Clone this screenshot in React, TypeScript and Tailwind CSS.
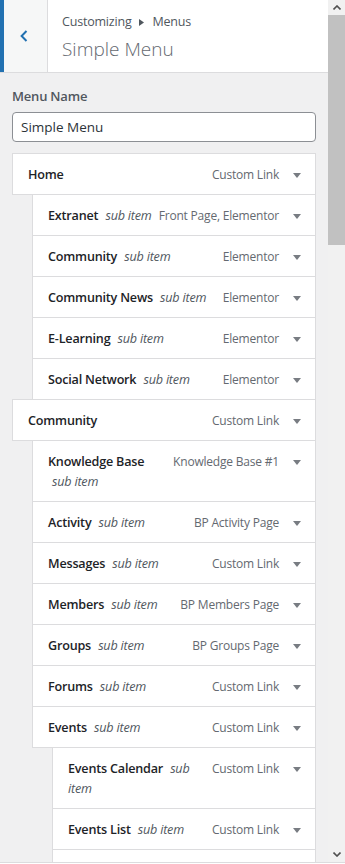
import { ReactNode } from "react";

type MenuItem = {
  name: string;
  type: string;
  depth: 0 | 1 | 2;
};

const items: MenuItem[] = [
  { name: "Home", type: "Custom Link", depth: 0 },
  { name: "Extranet", type: "Front Page, Elementor", depth: 1 },
  { name: "Community", type: "Elementor", depth: 1 },
  { name: "Community News", type: "Elementor", depth: 1 },
  { name: "E-Learning", type: "Elementor", depth: 1 },
  { name: "Social Network", type: "Elementor", depth: 1 },
  { name: "Community", type: "Custom Link", depth: 0 },
  { name: "Knowledge Base", type: "Knowledge Base #1", depth: 1 },
  { name: "Activity", type: "BP Activity Page", depth: 1 },
  { name: "Messages", type: "Custom Link", depth: 1 },
  { name: "Members", type: "BP Members Page", depth: 1 },
  { name: "Groups", type: "BP Groups Page", depth: 1 },
  { name: "Forums", type: "Custom Link", depth: 1 },
  { name: "Events", type: "Custom Link", depth: 1 },
  { name: "Events Calendar", type: "Custom Link", depth: 2 },
  { name: "Events List", type: "Custom Link", depth: 2 },
  { name: "Events Map", type: "Custom Link", depth: 2 },
];

const indent = ["ml-0", "ml-5", "ml-10"];

//small grey triangle used as the expand toggle
function ToggleArrow() {
  return (
    <svg width="8" height="5" viewBox="0 0 8 5">
      <path d="M0 0h8L4 5z" fill="#787c82" />
    </svg>
  );
}

function MenuRow({ item }: { item: MenuItem }) {
  return (
    <div
      className={`-mt-px flex border border-[#dcdcde] bg-white pt-[11px] pb-[9px] pl-[15px] first:mt-0 ${indent[item.depth]}`}
    >
      <div className="min-w-0 flex-1 text-[12.6px] leading-5 font-semibold text-[#1d2327]">
        {item.name}
        {item.depth > 0 && (
          <>
            {" "}
            <span className="ml-1 font-normal italic text-[#50575e]">sub item</span>
          </>
        )}
      </div>
      <div className="ml-[6px] shrink-0 leading-5 text-[#646970]">{item.type}</div>
      <div className="flex h-5 w-9 shrink-0 items-center justify-center">
        <ToggleArrow />
      </div>
    </div>
  );
}

function ScrollArrow({ children }: { children: ReactNode }) {
  return <div className="flex h-[15px] items-center justify-center">{children}</div>;
}

export default function App() {
  return (
    <div
      className="flex h-[864px] w-[345px] flex-col overflow-hidden bg-[#f0f0f1] text-[12px] tracking-[-0.2px]"
      style={{ fontFamily: '"Open Sans", "Noto Sans", sans-serif' }}
    >
      <div className="flex min-h-0 flex-1">
        <div className="flex min-w-0 flex-1 flex-col overflow-hidden">
          {/* header */}
          <div className="flex h-[73px] shrink-0 border-b border-[#dcdcde] bg-white">
            <div className="w-1 bg-[#2271b1]" />
            <div className="flex w-[44px] items-center justify-center border-r border-[#dcdcde] bg-[#f6f7f7] pr-[4px]">
              <svg width="8" height="12" viewBox="0 0 8 12">
                <path d="M6.5 1 1.6 6l4.9 5" fill="none" stroke="#2271b1" strokeWidth="2" />
              </svg>
            </div>
            <div className="flex flex-col pl-[14px] pt-3">
              <div className="flex items-center text-[12.5px] leading-5 text-[#50575e]">
                Customizing
                <svg width="5" height="7" viewBox="0 0 5 7" className="mx-[8px]">
                  <path d="M0 0l5 3.5L0 7z" fill="#50575e" />
                </svg>
                Menus
              </div>
              <div className="mt-[3px] text-[19px] font-light leading-7 tracking-normal text-[#646970]">
                Simple Menu
              </div>
            </div>
          </div>

          {/* menu name */}
          <div className="px-3 pt-[13px]">
            <div className="text-[13px] font-semibold leading-5 text-[#50575e]">Menu Name</div>
            <input
              type="text"
              defaultValue="Simple Menu"
              className="mt-[6px] h-[30px] w-full rounded border border-[#8c8f94] bg-white px-2 text-[13.5px] tracking-normal text-[#2c3338] outline-none"
            />

            {/* menu items */}
            <div className="mt-[11px] flex flex-col">
              {items.map((item, i) => (
                <MenuRow key={i} item={item} />
              ))}
            </div>
          </div>
        </div>

        {/* scrollbar */}
        <div className="flex w-[17px] shrink-0 flex-col bg-[#f1f1f1]">
          <ScrollArrow>
            <svg width="8" height="5" viewBox="0 0 8 5">
              <path d="M0.5 4.5 4 1l3.5 3.5" fill="none" stroke="#505050" strokeWidth="1.6" />
            </svg>
          </ScrollArrow>
          <div className="h-[230px] bg-[#c1c1c1]" />
          <div className="flex-1" />
          <ScrollArrow>
            <svg width="8" height="5" viewBox="0 0 8 5">
              <path d="M0.5 0.5 4 4l3.5-3.5" fill="none" stroke="#505050" strokeWidth="1.6" />
            </svg>
          </ScrollArrow>
        </div>
      </div>
      <div className="h-[2px] shrink-0 border-t border-[#dcdcde] bg-white" />
    </div>
  );
}
